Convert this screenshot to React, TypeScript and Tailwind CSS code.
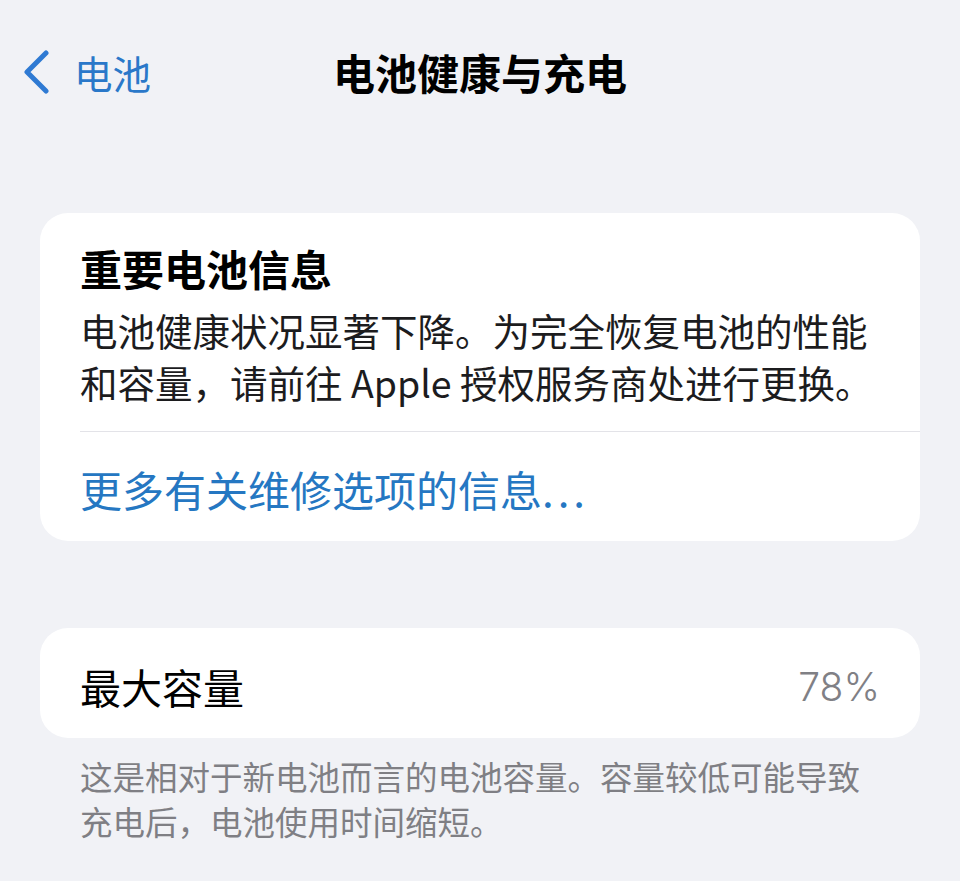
const font = "font-['PingFang_SC','Noto_Sans_CJK_SC',sans-serif]";

function BackChevron() {
  return (
    <svg width="30" height="44" viewBox="0 0 30 44" fill="none" className="shrink-0">
      <path
        d="M25 3 L6 22 L25 41"
        stroke="#2f7ad3"
        strokeWidth="5"
        strokeLinecap="round"
        strokeLinejoin="round"
      />
    </svg>
  );
}

export default function App() {
  return (
    <div className={`${font} h-[881px] w-[960px] overflow-hidden bg-[#f1f2f6] pt-[46px] text-[#1c1c1e]`}>
      {/* nav bar */}
      <header className="relative flex h-[52px] items-center">
        <div className="flex items-center gap-[23px] pl-[21px]">
          <BackChevron />
          <span className="text-[38.5px] leading-none text-[#2a78c9]">电池</span>
        </div>
        <h1 className="pointer-events-none absolute inset-x-0 text-center text-[42px] font-bold leading-none text-black">
          电池健康与充电
        </h1>
      </header>

      <main className="px-[40px] pt-[115px]">
        {/* battery warning card */}
        <section className="rounded-[28px] bg-white pb-[26px] pl-[40px] pt-[27px]">
          <h2 className="text-[42px] font-bold leading-[56px] text-black">重要电池信息</h2>
          <p className="mt-[8px] pr-[40px] text-[37.5px] leading-[52px]">
            电池健康状况显著下降。为完全恢复电池的性能
            <br />
            和容量，请前往 Apple 授权服务商处进行更换。
          </p>
          <div className="mt-[23px] h-px bg-[#e3e3e8]" />
          <a className="mt-[31px] block text-[42px] leading-[52px] text-[#2577c2]">
            更多有关维修选项的信息<span className="tracking-[4px]">...</span>
          </a>
        </section>

        {/* capacity row */}
        <section className="mt-[87px] flex h-[110px] items-center justify-between rounded-[28px] bg-white px-[40px] pt-[6px]">
          <span className="text-[41px] leading-none text-black">最大容量</span>
          <span className="font-['Inter',sans-serif] text-[39px] font-light leading-none text-[#808085]">78%</span>
        </section>

        <p className="mt-[15px] pl-[40px] text-[32.5px] leading-[45px] text-[#7f7f84]">
          这是相对于新电池而言的电池容量。容量较低可能导致
          <br />
          充电后，电池使用时间缩短。
        </p>
      </main>
    </div>
  );
}
